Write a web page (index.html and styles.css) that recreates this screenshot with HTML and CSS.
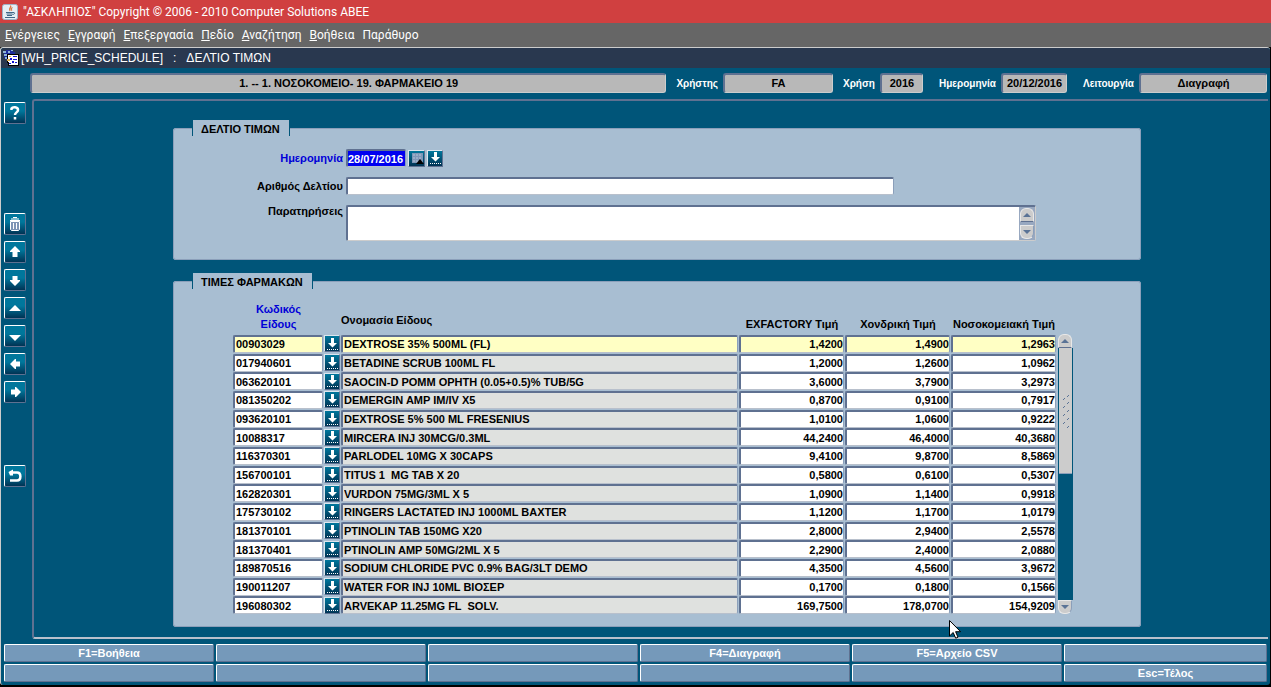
FILE: index.html
```html
<!DOCTYPE html>
<html lang="el">
<head>
    <meta charset="UTF-8">
    <meta name="viewport" content="width=device-width, initial-scale=1.0">
    <title>"ΑΣΚΛΗΠΙΟΣ" Copyright © 2006 - 2010 Computer Solutions ΑΒΕΕ</title>
    <link rel="stylesheet" href="styles.css">
</head>
<body>

    <header class="title-bar">
        <svg class="java-icon" viewBox="0 0 16 16">
            <rect x="0.5" y="0.5" width="15" height="15" rx="2" fill="#e6eef5" stroke="#9fb4c8"/>
            <path d="M8.500 1.500c1.500 2-2.500 2.500-.5 5.500M10.500 3.500c-2 1-1.500 2-.5 3" fill="none" stroke="#d8703a" stroke-width="1.200"/>
            <path d="M4 8.500h7M4.500 10h6M5 11.500h5M11 8.500c2.500-.5 2 2-.5 2M3 13.500h10" fill="none" stroke="#3f6788"/>
        </svg>
        <span>"ΑΣΚΛΗΠΙΟΣ" Copyright © 2006 - 2010 Computer Solutions ΑΒΕΕ</span>
    </header>

    <nav class="menu">
        <a href="#"><u>Ε</u>νέργειες</a>
        <a href="#"><u>Ε</u>γγραφή</a>
        <a href="#"><u>Ε</u>πεξεργασία</a>
        <a href="#"><u>Π</u>εδίο</a>
        <a href="#"><u>Α</u>ναζήτηση</a>
        <a href="#"><u>Β</u>οήθεια</a>
        <a href="#">Παράθυρο</a>
    </nav>

    <main class="window">
        <div class="window-title">
            <svg class="form-icon" viewBox="0 0 16 16" shape-rendering="crispEdges">
                <path d="M3 0h7v2h2v3H5v5H3V8H1V3h2z" fill="#1c2c9c"/>
                <path d="M0 1h3v2H0zM1 4h3v2H1zM2 7h2v2H2zM5 1h2v2H5zM8 0h2v1H8z" fill="#8fb4d8"/>
                <path d="M4 4h12v12H5v-3H4z" fill="#000"/>
                <path d="M5 5h10v10H6v-3H5z" fill="#fff"/>
                <path d="M10 6h4v1h-4zM10 9h4v1h-4zM7 8h2v2H7zM9 11h2v2H9zM6 13h2v1H6zM12 12h2v1h-2z" fill="#1414d0"/>
                <path d="M4 9h3v2H4zM6 6h2v1H6z" fill="#e0b050"/>
            </svg>
            <h1>[WH_PRICE_SCHEDULE] &nbsp;&nbsp;: &nbsp;&nbsp;ΔΕΛΤΙΟ ΤΙΜΩΝ</h1>
        </div>

        <div class="status">
            <output class="status-box wide">1. -- 1. ΝΟΣΟΚΟΜΕΙΟ- 19. ΦΑΡΜΑΚΕΙΟ 19</output>
            <label for="user">Χρήστης</label>
            <output class="status-box user" id="user">FA</output>
            <label for="year">Χρήση</label>
            <output class="status-box year" id="year">2016</output>
            <label for="today">Ημερομηνία</label>
            <output class="status-box today" id="today">20/12/2016</output>
            <label for="mode">Λειτουργία</label>
            <output class="status-box mode" id="mode">Διαγραφή</output>
        </div>

        <div class="work">
            <div class="toolbar">
                <button class="tool help" aria-label="Βοήθεια"><svg viewBox="0 0 18 18"><path d="M5.500 6V4.500C6.500 2.800 12 2.500 12 6c0 2.500-3 2.300-3 5M9 13v2.500" fill="none" stroke="#fff" stroke-width="2.500"/></svg></button>
                <button class="tool" aria-label="Διαγραφή"><svg viewBox="0 0 18 18"><path d="M4.500 6.500h9v8l-1 1h-7l-1-1z" fill="#7d94b5" stroke="#fff"/><path d="M4 5.500h10M5 4h8M7 2.500h4M7.500 8v6M10.500 8v6" fill="none" stroke="#fff"/></svg></button>
                <button class="tool" aria-label="Προηγούμενο"><svg viewBox="0 0 18 18"><path d="M9 3l5 5v1h-2.500v5h-5V9H4V8z" fill="#fff"/></svg></button>
                <button class="tool" aria-label="Επόμενο"><svg viewBox="0 0 18 18"><path d="M9 15l5-5V9h-2.500V5h-5v4H4v1z" fill="#fff"/></svg></button>
                <button class="tool" aria-label="Πάνω"><svg viewBox="0 0 18 18"><path d="M9 6l6 6H3z" fill="#fff"/></svg></button>
                <button class="tool" aria-label="Κάτω"><svg viewBox="0 0 18 18"><path d="M3 8h12l-6 6z" fill="#fff"/></svg></button>
                <button class="tool" aria-label="Αριστερά"><svg viewBox="0 0 18 18"><path d="M4 9l5-5h1v2.500h4v5h-4V14H9z" fill="#fff"/></svg></button>
                <button class="tool" aria-label="Δεξιά"><svg viewBox="0 0 18 18"><path d="M15 9l-5-5H9v2.500H5v5h4V14h1z" fill="#fff"/></svg></button>
                <button class="tool back" aria-label="Επιστροφή"><svg viewBox="0 0 18 18"><path d="M4 5.500h7c4.500 0 4.500 8 0 8H4" fill="none" stroke="#fff" stroke-width="2.500"/><path d="M2.500 5L7 2.500v6H4z" fill="#fff"/></svg></button>
            </div>

            <div class="canvas">
                <fieldset class="group">
                    <legend>ΔΕΛΤΙΟ ΤΙΜΩΝ</legend>
                    <div class="form">
                        <label class="required" for="date">Ημερομηνία</label>
                        <div class="date-row">
                            <input class="field date" id="date" type="text" value="28/07/2016">
                            <button class="mini calendar" aria-label="Ημερολόγιο"><svg viewBox="0 0 14 14"><path d="M2 2h11v10H2z" fill="#7f97b8"/><path d="M3 4h9M3 7h9M3 10h5" stroke="#b5c4d8" stroke-dasharray="2 1"/><path d="M10 8l4 5H6z" fill="#000"/></svg></button>
                            <button class="mini" aria-label="Λίστα ημερομηνιών"><svg viewBox="0 0 12 14"><path d="M5 1h3v5h3l-4.500 4.500L2 6h3z" fill="#fff"/><path d="M1 12.500h11" stroke="#fff" stroke-dasharray="1 1"/></svg></button>
                        </div>
                        <label for="number">Αριθμός Δελτίου</label>
                        <input class="field number" id="number" type="text">
                        <label class="notes-label" for="notes">Παρατηρήσεις</label>
                        <div class="notes-box">
                            <textarea id="notes"></textarea>
                            <div class="notes-scroll">
                                <button class="scroll-up" aria-label="Κύλιση σημειώσεων πάνω"><svg viewBox="0 0 8 4"><path d="M4 0l4 4H0z" fill="#5a7396"/></svg></button>
                                <button class="scroll-down" aria-label="Κύλιση σημειώσεων κάτω"><svg viewBox="0 0 8 4"><path d="M0 0h8L4 4z" fill="#5a7396"/></svg></button>
                            </div>
                        </div>
                    </div>
                </fieldset>

                <fieldset class="group prices">
                    <legend>ΤΙΜΕΣ ΦΑΡΜΑΚΩΝ</legend>
                    <div class="grid">
                        <table>
                            <thead>
                                <tr>
                                    <th class="col-code required">Κωδικός<br>Είδους</th>
                                    <th class="col-list"></th>
                                    <th class="col-name">Ονομασία Είδους</th>
                                    <th class="col-price">EXFACTORY Τιμή</th>
                                    <th class="col-price">Χονδρική Τιμή</th>
                                    <th class="col-price">Νοσοκομειακή Τιμή</th>
                                </tr>
                            </thead>
                            <tbody id="rows"></tbody>
                        </table>
                        <div class="scrollbar">
                            <button class="scroll-up" aria-label="Κύλιση πάνω"><svg viewBox="0 0 8 4"><path d="M4 0l4 4H0z" fill="#5a7396"/></svg></button>
                            <div class="track">
                                <div class="thumb">
                                    <svg viewBox="0 0 8 34"><path d="M1 6l2-2M5 3l2-2M1 14l2-2M5 10l2-2M1 22l2-2M5 18l2-2M1 30l2-2M5 26l2-2M5 34l2-2" stroke="#5a7396"/></svg>
                                </div>
                            </div>
                            <button class="scroll-down" aria-label="Κύλιση κάτω"><svg viewBox="0 0 8 4"><path d="M0 0h8L4 4z" fill="#5a7396"/></svg></button>
                        </div>
                    </div>
                </fieldset>
            </div>
        </div>

        <div class="keys">
            <button>F1=Βοήθεια</button>
            <button aria-label="F2"></button>
            <button aria-label="F3"></button>
            <button>F4=Διαγραφή</button>
            <button>F5=Αρχείο CSV</button>
            <button aria-label="F6"></button>
            <button aria-label="F7"></button>
            <button aria-label="F8"></button>
            <button aria-label="F9"></button>
            <button aria-label="F10"></button>
            <button aria-label="F11"></button>
            <button>Esc=Τέλος</button>
        </div>
    </main>

    <svg class="pointer" viewBox="0 0 12 19"><path d="M.5.5v15.500l3.700-3.500 2.500 5.700 2.300-1-2.400-5.500h5z" fill="#fff" stroke="#000"/></svg>

    <script>
        const items = [
            ["00903029", "DEXTROSE 35% 500ML (FL)", "1,4200", "1,4900", "1,2963"],
            ["017940601", "BETADINE SCRUB 100ML FL", "1,2000", "1,2600", "1,0962"],
            ["063620101", "SAOCIN-D POMM OPHTH (0.05+0.5)% TUB/5G", "3,6000", "3,7900", "3,2973"],
            ["081350202", "DEMERGIN AMP IM/IV X5", "0,8700", "0,9100", "0,7917"],
            ["093620101", "DEXTROSE 5% 500 ML FRESENIUS", "1,0100", "1,0600", "0,9222"],
            ["10088317", "MIRCERA INJ 30MCG/0.3ML", "44,2400", "46,4000", "40,3680"],
            ["116370301", "PARLODEL 10MG X 30CAPS", "9,4100", "9,8700", "8,5869"],
            ["156700101", "TITUS 1  MG TAB X 20", "0,5800", "0,6100", "0,5307"],
            ["162820301", "VURDON 75MG/3ML X 5", "1,0900", "1,1400", "0,9918"],
            ["175730102", "RINGERS LACTATED INJ 1000ML BAXTER", "1,1200", "1,1700", "1,0179"],
            ["181370101", "PTINOLIN TAB 150MG X20", "2,8000", "2,9400", "2,5578"],
            ["181370401", "PTINOLIN AMP 50MG/2ML X 5", "2,2900", "2,4000", "2,0880"],
            ["189870516", "SODIUM CHLORIDE PVC 0.9% BAG/3LT DEMO", "4,3500", "4,5600", "3,9672"],
            ["190011207", "WATER FOR INJ 10ML ΒΙΟΣΕΡ", "0,1700", "0,1800", "0,1566"],
            ["196080302", "ARVEKAP 11.25MG FL  SOLV.", "169,7500", "178,0700", "154,9209"]
        ];

        const listIcon = '<svg viewBox="0 0 12 14"><path d="M5 1h3v5h3l-4.500 4.500L2 6h3z" fill="#fff"/><path d="M1 12.500h11" stroke="#fff" stroke-dasharray="1 1"/></svg>';

        // One table row per item, every cell is an editable field
        document.getElementById("rows").innerHTML = items.map(([code, name, factory, wholesale, hospital]) => `
            <tr>
                <td><input class="field" aria-label="Κωδικός Είδους" value="${code}"></td>
                <td><button class="mini" aria-label="Λίστα ειδών">${listIcon}</button></td>
                <td><input class="field name" aria-label="Ονομασία Είδους" value="${name}"></td>
                <td><input class="field price" aria-label="EXFACTORY Τιμή" value="${factory}"></td>
                <td><input class="field price" aria-label="Χονδρική Τιμή" value="${wholesale}"></td>
                <td><input class="field price" aria-label="Νοσοκομειακή Τιμή" value="${hospital}"></td>
            </tr>`).join("");
    </script>

</body>
</html>
```
FILE: styles.css
```css
* {
    box-sizing: border-box;
}
body {
    margin: 0;
    min-height: 100vh;
    display: flex;
    flex-direction: column;
    background-color: #000;
    font-family: "Liberation Sans", Arial, sans-serif;
    font-size: 11px;
    font-weight: bold;
    color: #000;
}
button, input, textarea {
    font: inherit;
    color: inherit;
    margin: 0;
    padding: 0;
    border-radius: 0;
}
svg {
    display: block;
}
.title-bar {
    display: flex;
    align-items: center;
    gap: 5px;
    height: 23px;
    padding-left: 2px;
    background-color: #d04040;
    color: #fff;
    font: 12px Roboto, sans-serif;
}
.java-icon {
    width: 16px;
    height: 16px;
}
.menu {
    display: flex;
    align-items: center;
    gap: 8px;
    height: 24px;
    padding-left: 5px;
    background-color: #666;
    font: 12px Roboto, sans-serif;
}
.menu a {
    color: #fff;
    text-decoration: none;
}
.window {
    flex: 1;
    display: flex;
    flex-direction: column;
    margin: 0 1px 2px 0;
    border-top: 1px solid #ccc;
    border-left: 1px solid #ccc;
    border-radius: 3px;
    background-color: #005579;
}
.window-title {
    display: flex;
    align-items: center;
    gap: 2px;
    height: 20px;
    padding-left: 2px;
    background-color: #29384f;
    border-radius: 3px 3px 0 0;
}
.window-title h1 {
    margin: 0;
    font-size: 12px;
    font-weight: normal;
    color: #fff;
}
.form-icon {
    width: 16px;
    height: 16px;
}
.status {
    display: flex;
    align-items: center;
    padding: 5px 3px 6px 29px;
}
.status label {
    color: #fff;
    font-size: 10px;
    text-align: right;
    padding: 0 5px 0 16px;
}
.status .wide + label,
.status .user + label {
    padding-left: 10px;
}
.status-box {
    height: 20px;
    line-height: 17px;
    text-align: center;
    background-color: #b8b8b8;
    border: 2px solid #5f7191;
    border-right: 1px solid #ccc;
    border-bottom: 1px solid #ccc;
    border-radius: 3px;
}
.status-box.wide {
    flex: 1;
}
.status-box.user {
    width: 110px;
}
.status-box.year {
    width: 43px;
}
.status-box.today {
    width: 66px;
}
.status-box.mode {
    width: 128px;
}
.work {
    flex: 1;
    display: flex;
}
.toolbar {
    display: flex;
    flex-direction: column;
    gap: 6px;
    width: 31px;
    padding: 3px 0 0 3px;
}
.tool {
    width: 22px;
    height: 22px;
    border: 1px solid #fff;
    border-right-color: #5f7191;
    border-bottom-color: #5f7191;
    border-radius: 2px;
    background: linear-gradient(#00779c 40%, #003354);
}
.tool svg {
    width: 18px;
    height: 18px;
    margin: 0 auto;
}
.tool.help {
    margin-bottom: 83px;
}
.tool.back {
    margin-top: 56px;
}
.canvas {
    flex: 1;
    margin-right: 2px;
    padding: 19px 127px 10px 139px;
    border: 2px solid #5f7191;
    border-right: none;
    border-bottom-color: #b8c0cc;
    border-radius: 3px 0 0 3px;
}
.group {
    min-width: 0;
    margin: 0;
    padding: 13px 67px 18px 59px;
    border: 1px solid #8b9fba;
    border-radius: 3px;
    background-color: #a8bed2;
}
.group legend {
    height: 16px;
    margin-left: -41px;
    padding: 0 9px 0 8px;
    line-height: 18px;
    background-color: #a8bed2;
    border-left: 1px solid #005579;
    border-right: 1px solid #005579;
}
.required {
    color: #0000d8;
}
.form {
    display: grid;
    grid-template-columns: 110px 1fr;
    column-gap: 3px;
    row-gap: 10px;
    align-items: center;
}
.form label {
    text-align: right;
}
.form .notes-label {
    align-self: start;
}
.date-row {
    display: flex;
    align-items: center;
    gap: 2px;
}
.field {
    display: block;
    width: 100%;
    height: 18px;
    padding: 0 1px;
    background-color: #fff;
    border: 2px solid #5f7191;
    border-right: 1px solid #8b9fba;
    border-bottom: 1px solid #b8c0cc;
    border-radius: 2px;
    outline: none;
}
.field.date {
    width: 60px;
    padding: 0;
    color: #fff;
    background-color: #0000f0;
}
.field.number {
    max-width: 548px;
}
.mini {
    display: block;
    width: 16px;
    height: 17px;
    border: 1px solid #dde6ee;
    border-right-color: #5f7191;
    border-bottom-color: #5f7191;
    background: linear-gradient(#00779c, #003354);
}
.mini svg {
    width: 12px;
    height: 14px;
    margin: 0 auto;
}
.mini.calendar {
    width: 17px;
}
.mini.calendar svg {
    width: 14px;
}
.notes-box {
    display: flex;
    max-width: 690px;
    height: 36px;
    border: 2px solid #5f7191;
    border-right: 1px solid #ccc;
    border-bottom: 1px solid #ccc;
    border-radius: 2px;
    background-color: #98a8c0;
}
.notes-box textarea {
    flex: 1;
    border: none;
    outline: none;
    resize: none;
}
.notes-scroll {
    display: flex;
    flex-direction: column;
    gap: 3px;
    padding: 1px;
}
.prices {
    margin-top: 13px;
    padding: 9px 67px 12px 59px;
}
.grid {
    display: flex;
    align-items: flex-end;
    gap: 1px;
}
table {
    flex: 1;
    table-layout: fixed;
    border-collapse: collapse;
}
thead tr {
    height: 36px;
}
th {
    padding: 0 0 2px;
    line-height: 15px;
    vertical-align: bottom;
    white-space: nowrap;
}
td {
    padding: 0 1px 0 0;
}
tbody tr {
    height: 19px;
}
tbody tr:nth-child(3n) {
    height: 18px;
}
tbody tr:first-child .field {
    background-color: #ffffc4;
}
tbody .field {
    white-space: pre;
}
.col-code {
    width: 91px;
}
.col-list {
    width: 17px;
}
.col-name {
    text-align: left;
    padding-bottom: 6px;
}
.col-price {
    width: 106px;
}
.field.name {
    background-color: #dfe1df;
}
.field.price {
    padding: 0;
    text-align: right;
}
.scrollbar {
    display: flex;
    flex-direction: column;
    width: 15px;
    height: 280px;
}
.scroll-up, .scroll-down {
    display: flex;
    align-items: center;
    justify-content: center;
    width: 14px;
    height: 14px;
    background-color: #ccc;
    border: 1px solid #e8e8e8;
}
.scroll-up {
    border-bottom-color: #5f7191;
    border-radius: 6px 6px 0 0;
}
.scroll-down {
    border-right-color: #8b9fba;
    border-radius: 0 0 6px 6px;
}
.scroll-up svg, .scroll-down svg {
    width: 8px;
    height: 4px;
}
.track {
    flex: 1;
    background-color: #005579;
}
.thumb {
    display: flex;
    align-items: center;
    justify-content: center;
    height: 50%;
    margin: 0 1px;
    background-color: #ccc;
    border-bottom: 1px solid #8b9fba;
}
.thumb svg {
    width: 8px;
    height: 34px;
}
.keys {
    display: grid;
    grid-template-columns: repeat(5, 30fr) 29fr;
    gap: 2px;
    padding: 5px 3px 3px;
}
.keys button {
    height: 18px;
    color: #fff;
    background-color: #7599ba;
    border: 1px solid #fff;
    border-right-color: #5f7191;
    border-bottom-color: #5f7191;
    border-radius: 2px;
}
.pointer {
    position: absolute;
    left: 949px;
    top: 620px;
    width: 12px;
    height: 19px;
}
```
